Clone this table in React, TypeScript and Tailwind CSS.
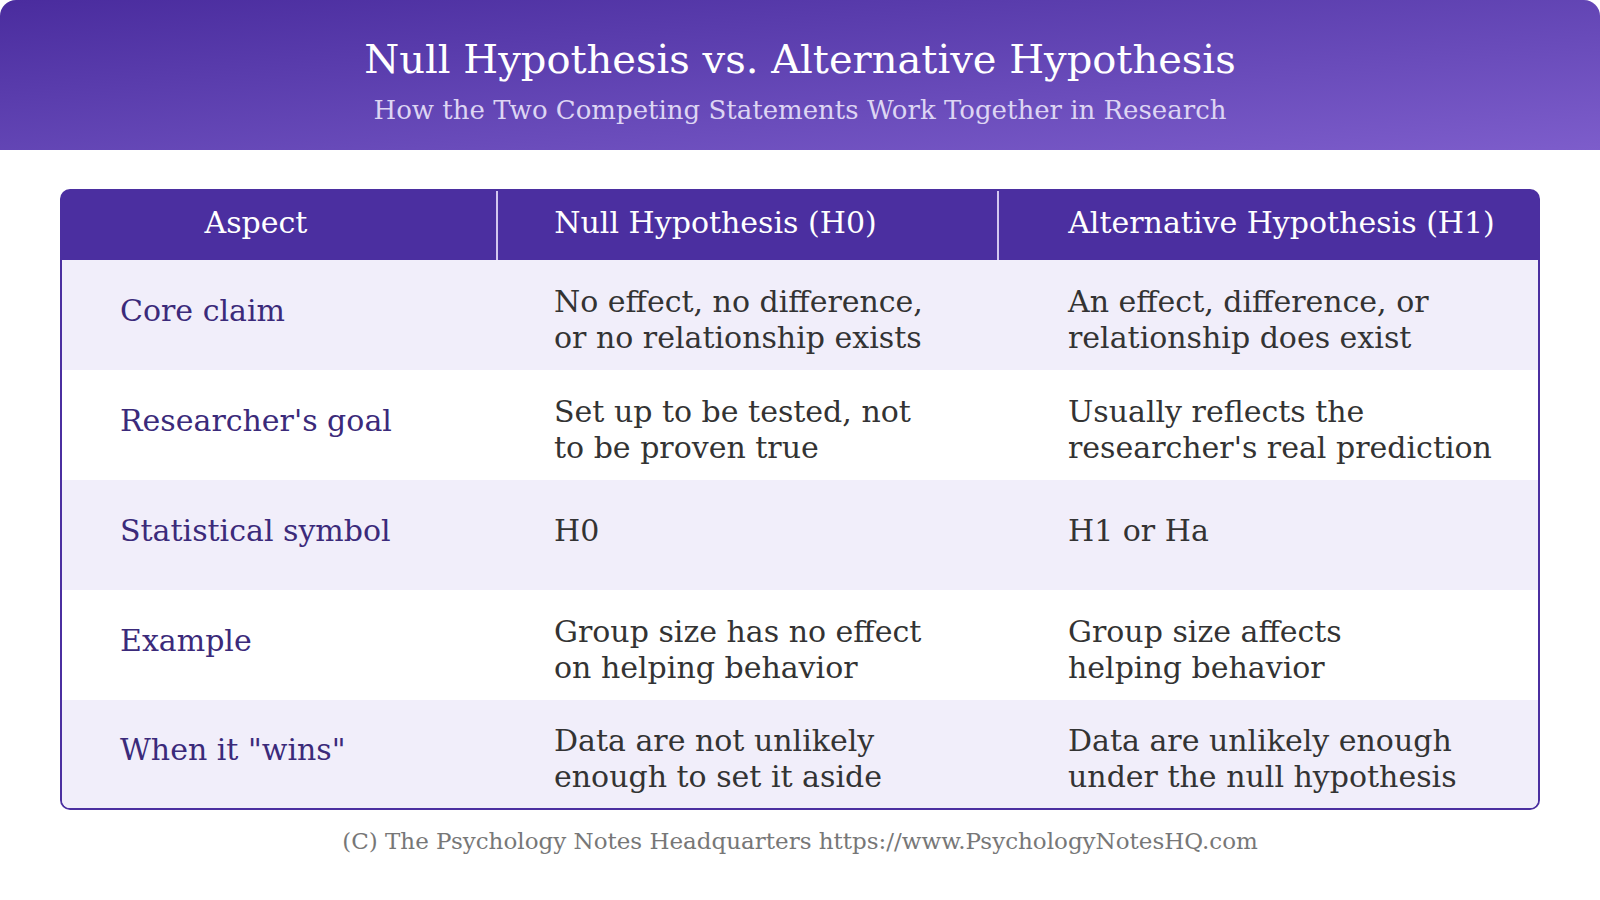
const rows = [
  {
    aspect: 'Core claim',
    nul: ['No effect, no difference,', 'or no relationship exists'],
    alt: ['An effect, difference, or', 'relationship does exist'],
  },
  {
    aspect: "Researcher's goal",
    nul: ['Set up to be tested, not', 'to be proven true'],
    alt: ['Usually reflects the', "researcher's real prediction"],
  },
  {
    aspect: 'Statistical symbol',
    nul: ['H0'],
    alt: ['H1 or Ha'],
  },
  {
    aspect: 'Example',
    nul: ['Group size has no effect', 'on helping behavior'],
    alt: ['Group size affects', 'helping behavior'],
  },
  {
    aspect: 'When it "wins"',
    nul: ['Data are not unlikely', 'enough to set it aside'],
    alt: ['Data are unlikely enough', 'under the null hypothesis'],
  },
];

function Cell({ lines, pl }: { lines: string[]; pl: string }) {
  const multi = lines.length > 1;
  return (
    <div className={`flex items-center text-[#333333] ${pl} ${multi ? 'pt-[10px]' : 'pb-[8px]'}`}>
      <div>
        {lines.map((l) => (
          <div key={l}>{l}</div>
        ))}
      </div>
    </div>
  );
}

export default function App() {
  return (
    <div className="w-[1600px] h-[900px] bg-white font-['DejaVu_Serif',serif] flex flex-col">
      {/* Header */}
      <div className="h-[150px] w-full rounded-t-[16px] bg-linear-to-br from-[#4a2c9e] to-[#7d5dcb] flex flex-col items-center">
        <h1 className="mt-[36px] text-[40px] leading-[46px] text-white">
          Null Hypothesis vs. Alternative Hypothesis
        </h1>
        <p className="mt-[12px] text-[26px] leading-[32px] text-[#ddd5f3]">
          How the Two Competing Statements Work Together in Research
        </p>
      </div>

      {/* Table */}
      <div className="mx-[60px] mt-[39px] w-[1480px] rounded-[10px] bg-[#4b2fa0] p-[2px]">
        <div className="grid grid-cols-[434px_501px_541px] h-[69px] bg-[#4b2fa0] rounded-t-[8px] text-white text-[30px] leading-[36px]">
          <div className="flex items-center justify-center pr-[46px] pb-[6px]">Aspect</div>
          <div className="flex items-center justify-center pr-[64px] pb-[6px] border-l-2 border-[#d3c7f0]">
            Null Hypothesis (H0)
          </div>
          <div className="flex items-center justify-center pl-[26px] pb-[6px] border-l-2 border-[#d3c7f0]">
            Alternative Hypothesis (H1)
          </div>
        </div>
        <div className="rounded-b-[8px] overflow-hidden bg-white">
          {rows.map((r, i) => (
            <div
              key={r.aspect}
              className={`grid grid-cols-[434px_501px_541px] text-[30px] leading-[36px] ${
                i === rows.length - 1 ? 'h-[108px]' : 'h-[110px]'
              } ${i % 2 === 0 ? 'bg-[#f1eefa]' : 'bg-white'}`}
            >
              <div className="flex items-center pl-[58px] pb-[8px] text-[#3b2a7a]">{r.aspect}</div>
              <Cell lines={r.nul} pl="pl-[58px]" />
              <Cell lines={r.alt} pl="pl-[71px]" />
            </div>
          ))}
        </div>
      </div>

      {/* Footer */}
      <p className="mt-[14px] text-center text-[23px] leading-[34px] text-[#777777]">
        (C) The Psychology Notes Headquarters https://www.PsychologyNotesHQ.com
      </p>
    </div>
  );
}
